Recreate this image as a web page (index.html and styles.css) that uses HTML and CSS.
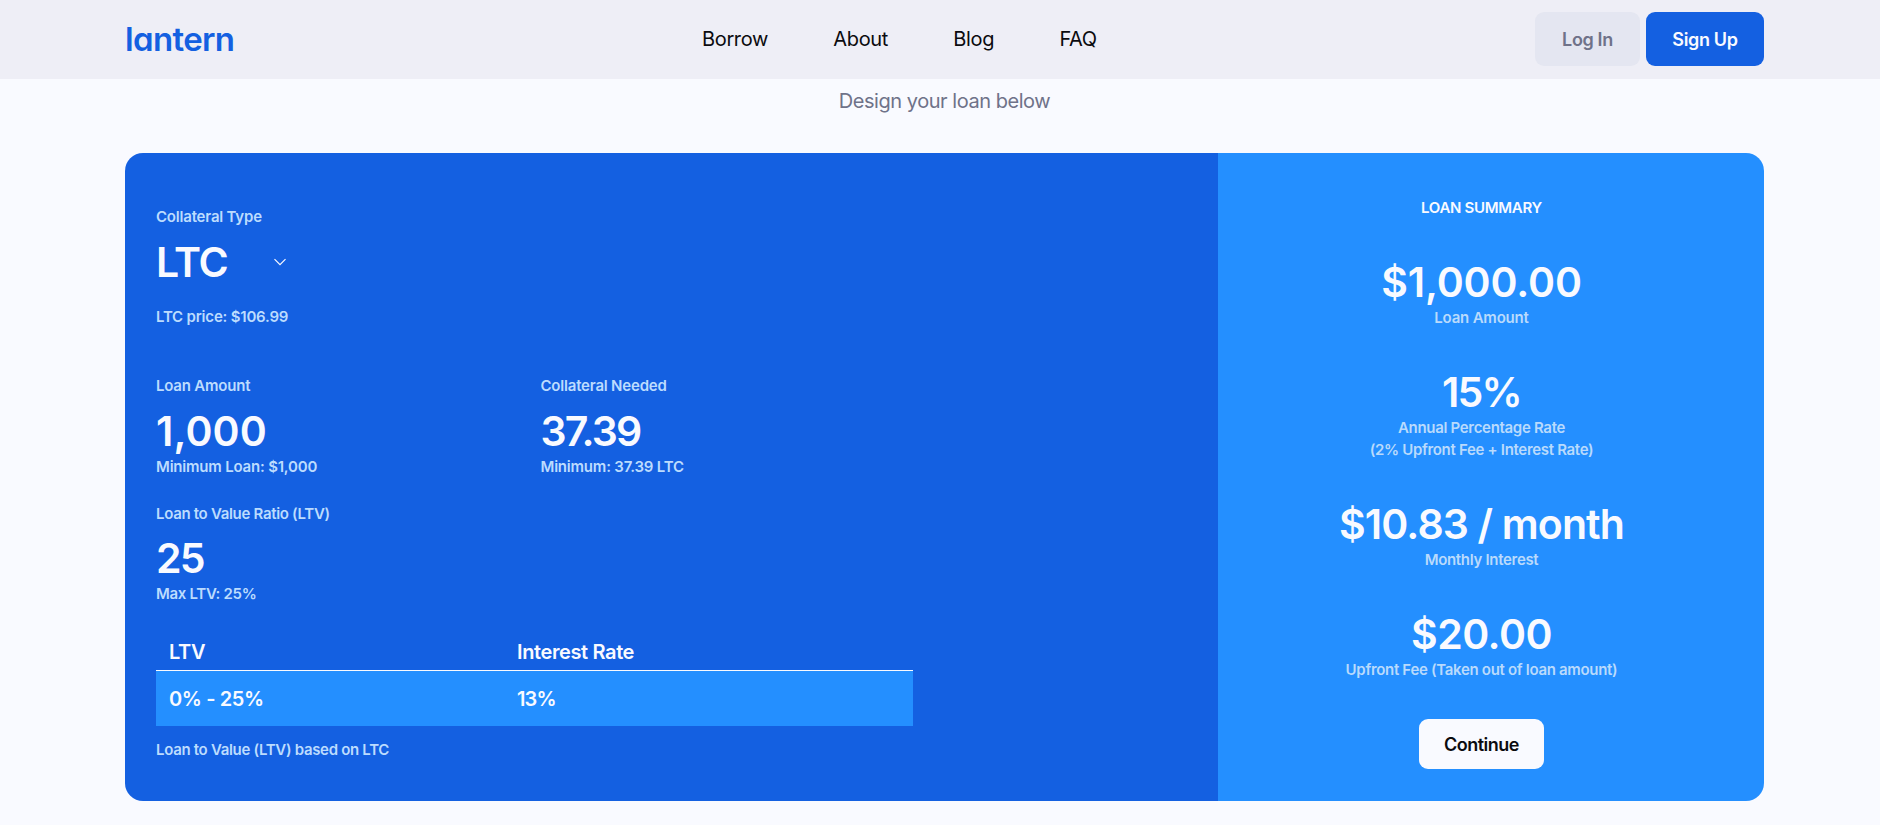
FILE: index.html
```
<!DOCTYPE html>
<html lang="en">
<head>
<meta charset="utf-8">
<title>Lantern</title>
<link rel="stylesheet" href="styles.css">
</head>
<body>
<header class="topbar">
  <a class="logo">lantern</a>
  <nav class="nav">
    <a>Borrow</a>
    <a>About</a>
    <a>Blog</a>
    <a>FAQ</a>
  </nav>
  <div class="actions">
    <button class="btn login">Log In</button>
    <button class="btn signup">Sign Up</button>
  </div>
</header>
<p class="subtitle">Design your loan below</p>
<main class="card">
  <section class="form">
    <div class="collateral">
      <div class="small label">Collateral Type</div>
      <div class="select">
        <span class="big coin">LTC</span>
        <svg class="chevron" width="14" height="10" viewBox="0 0 14 10"><path d="M1.5 2.2 7 7.7 12.5 2.2"/></svg>
      </div>
      <div class="small price">LTC price: $106.99</div>
    </div>
    <div class="amounts">
      <div class="field">
        <div class="small label">Loan Amount</div>
        <div class="big amount">1,000</div>
        <div class="small">Minimum Loan: $1,000</div>
      </div>
      <div class="field">
        <div class="small label">Collateral Needed</div>
        <div class="big narrow">37.39</div>
        <div class="small">Minimum: 37.39 LTC</div>
      </div>
    </div>
    <div class="field ratio">
      <div class="small label long">Loan to Value Ratio (LTV)</div>
      <div class="big narrow">25</div>
      <div class="small long">Max LTV: 25%</div>
    </div>
    <div class="rates">
      <div class="row head"><span>LTV</span><span>Interest Rate</span></div>
      <div class="row tier"><span>0% - 25%</span><span class="rate">13%</span></div>
    </div>
    <div class="small long note">Loan to Value (LTV) based on LTC</div>
  </section>
  <section class="summary">
    <h2 class="title">LOAN SUMMARY</h2>
    <div class="item">
      <div class="big total">$1,000.00</div>
      <div class="small">Loan Amount</div>
    </div>
    <div class="item">
      <div class="big narrow">15%</div>
      <div class="small long">Annual Percentage Rate</div>
      <div class="small long">(2% Upfront Fee + Interest Rate)</div>
    </div>
    <div class="item">
      <div class="big monthly">$10.83 / month</div>
      <div class="small long">Monthly Interest</div>
    </div>
    <div class="item">
      <div class="big fee">$20.00</div>
      <div class="small long">Upfront Fee (Taken out of loan amount)</div>
    </div>
    <button class="btn continue">Continue</button>
  </section>
</main>
</body>
</html>
```
FILE: styles.css
```
* { box-sizing: border-box; }
body { margin: 0; background: #f9faff; color: #0b0b0f; font-family: Inter, "Liberation Sans", sans-serif; }

.topbar { display: flex; align-items: center; height: 79px; padding: 0 116px 1px 125px; background: #eeeef6; }
.logo { width: 108px; color: #1460e1; font-size: 33px; font-weight: 600; line-height: 40px; letter-spacing: -0.65px; font-feature-settings: "cv11"; }
.nav { display: flex; gap: 65.3px; margin-left: 469px; font-size: 20px; line-height: 26px; letter-spacing: -0.35px; }
.actions { display: flex; gap: 6px; margin-left: auto; }

.btn { border: 0; border-radius: 9px; padding: 2px 0 0; font: 600 18px/24px Inter, "Liberation Sans", sans-serif; letter-spacing: -0.35px; white-space: nowrap; }
.login { width: 105px; height: 54px; background: #e4e6f1; color: #6f7289; }
.signup { width: 118px; height: 54px; background: #1460e1; color: #f9faff; }
.continue { width: 125px; height: 50px; margin-top: 38px; background: #f9faff; color: #0b0b0f; letter-spacing: -0.5px; }

.subtitle { margin: 9px 0 39px; padding-left: 9px; font-size: 20px; line-height: 26px; letter-spacing: -0.46px; text-align: center; color: #6f7289; }

.card { display: flex; width: 1639px; height: 648px; margin-left: 125px; border-radius: 18px; overflow: hidden; }
.form { width: 1093px; padding: 53px 31px 0; background: #1460e1; }
.summary { flex: 1; display: flex; flex-direction: column; align-items: center; padding: 44px 19px 0 0; background: #248fff; text-align: center; }

.small { font-size: 15px; font-weight: 600; line-height: 22px; letter-spacing: -0.2px; color: #bcdcfe; white-space: nowrap; }
.summary .small { color: #b9dafc; }
.long { letter-spacing: -0.31px; }
.label { margin-bottom: 10px; }
.big { font-size: 41px; font-weight: 600; line-height: 48px; color: #f9faff; white-space: nowrap; }
.big + .small { margin-top: 1px; }
.coin { width: 72px; letter-spacing: -1.3px; }
.amount { letter-spacing: 0.1px; }
.narrow { letter-spacing: -1.8px; }
.total { letter-spacing: -0.15px; }
.monthly { letter-spacing: -0.85px; }
.fee { letter-spacing: -0.55px; }

.select { display: flex; align-items: center; gap: 44.5px; }
.chevron { fill: none; stroke: #f9faff; stroke-width: 1.2; }
.price { margin-top: 20px; }
.amounts { display: grid; grid-template-columns: 384.5px 384.5px; margin-top: 47px; }
.ratio { margin-top: 25px; }
.ratio .label { margin-bottom: 9px; }

.rates { width: 757px; margin-top: 34px; color: #f9faff; font-size: 20px; font-weight: 600; line-height: 26px; letter-spacing: -0.38px; }
.row { display: grid; grid-template-columns: 348px 1fr; align-items: center; padding-left: 13px; }
.head { padding-bottom: 5px; border-bottom: 1px solid #f9faff; }
.tier { height: 55px; background: #248fff; }
.rate { letter-spacing: -0.9px; }
.note { margin-top: 13px; }

.title { margin: 0; font-size: 15px; font-weight: 600; line-height: 22px; letter-spacing: -0.3px; color: #f9faff; }
.item { margin-top: 39px; }
```
